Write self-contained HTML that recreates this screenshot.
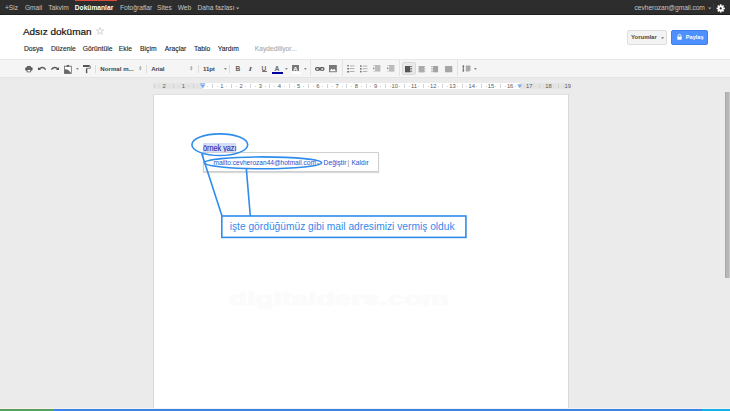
<!DOCTYPE html>
<html><head><meta charset="utf-8">
<style>
*{margin:0;padding:0;box-sizing:border-box}
html,body{width:730px;height:411px;overflow:hidden;background:#ebebeb;font-family:"Liberation Sans",sans-serif;position:relative}
.a{position:absolute;white-space:nowrap;line-height:1}
.b{position:absolute}
#bar{left:0;top:0;width:730px;height:14.7px;background:#2d2d2d;border-bottom:1px solid #1f1f1f}
.tb{color:#c4c4c4;font-size:6.66px;top:5.2px}
#hdr{left:0;top:14.7px;width:730px;height:44.3px;background:#fff}
.mn{font-size:6.78px;color:#222;top:46.3px;-webkit-text-stroke:0.1px currentColor}
#tool{left:0;top:59px;width:730px;height:19px;background:#f5f5f5;border-top:1px solid #e9e9e9;border-bottom:1px solid #e4e4e4}
.sep{position:absolute;width:1px;background:#dcdcdc;top:65px;height:8px}
.sepT{position:absolute;width:1px;background:#e3e3e3;top:60px;height:16px}
.tt{font-size:6.1px;color:#444;font-weight:bold;top:65.6px}
.rn{position:absolute;top:83.5px;width:16px;text-align:center;font-size:5.8px;line-height:1;color:#5a5a5a}
.rl{position:absolute;top:84.3px;width:0.7px;height:3.6px;background:#d2d2d2}
.rd{position:absolute;top:85.6px;width:0.8px;height:0.9px;background:#d0d0d0}
svg{position:absolute;overflow:visible}
</style></head><body>
<div class="b" id="bar"></div>
<div class="b" style="left:74.5px;top:0;width:42.5px;height:1.3px;background:#dd4b39"></div>
<div class="a tb" style="left:4.9px">+Siz</div>
<div class="a tb" style="left:24.9px">Gmail</div>
<div class="a tb" style="left:48.2px">Takvim</div>
<div class="a tb" style="left:74.8px;color:#fff;font-weight:bold">Dokümanlar</div>
<div class="a tb" style="left:120px">Fotoğraflar</div>
<div class="a tb" style="left:157px">Sites</div>
<div class="a tb" style="left:177.7px">Web</div>
<div class="a tb" style="left:197.5px">Daha fazlası</div>
<svg style="left:236px;top:7px" width="4" height="3"><path d="M0 0.5h3.4L1.7 2.4z" fill="#aaa"/></svg>
<div class="a tb" style="left:634.6px;letter-spacing:-0.065px">cevherozan@gmail.com</div>
<svg style="left:707.6px;top:7px" width="4" height="3"><path d="M0 0.5h3.4L1.7 2.4z" fill="#999"/></svg>
<div class="b" style="left:713px;top:3px;width:1px;height:9px;background:#3a3a3a"></div>
<svg style="left:715.5px;top:3.5px" width="10" height="9" viewBox="0 0 10 9">
<g fill="#fff" transform="translate(4.7 4.4) scale(0.93)">
<circle r="3.1"/>
<rect x="-0.9" y="-4.4" width="1.8" height="8.8"/>
<rect x="-0.9" y="-4.4" width="1.8" height="8.8" transform="rotate(45)"/>
<rect x="-0.9" y="-4.4" width="1.8" height="8.8" transform="rotate(90)"/>
<rect x="-0.9" y="-4.4" width="1.8" height="8.8" transform="rotate(135)"/>
<circle r="1.2" fill="#2d2d2d"/>
</g></svg>

<div class="b" id="hdr"></div>
<div class="a" style="left:22.9px;top:26.8px;font-size:9.96px;color:#111;-webkit-text-stroke:0.2px #111">Adsız doküman</div>
<svg style="left:95.5px;top:27.3px" width="8" height="8" viewBox="0 0 8 8"><path d="M4 0.4L4.95 3H7.6L5.45 4.6L6.25 7.3L4 5.65L1.75 7.3L2.55 4.6L0.4 3H3.05Z" fill="none" stroke="#c4c4c4" stroke-width="0.7"/></svg>
<div class="a mn" style="left:23.9px">Dosya</div>
<div class="a mn" style="left:50.9px">Düzenle</div>
<div class="a mn" style="left:82.8px">Görüntüle</div>
<div class="a mn" style="left:118.8px">Ekle</div>
<div class="a mn" style="left:140px">Biçim</div>
<div class="a mn" style="left:164.8px">Araçlar</div>
<div class="a mn" style="left:194px">Tablo</div>
<div class="a mn" style="left:217.7px">Yardım</div>
<div class="a mn" style="left:254.7px;color:#aaa">Kaydediliyor...</div>

<div class="b" style="left:627px;top:30px;width:40px;height:15px;background:#f3f3f3;border:1px solid #dedede;border-radius:2px"></div>
<div class="a" style="left:631px;top:34.4px;font-size:5.98px;font-weight:bold;color:#444">Yorumlar</div>
<svg style="left:660.5px;top:37px" width="4" height="3"><path d="M0 0.3h3.2L1.6 2.1z" fill="#777"/></svg>
<div class="b" style="left:671px;top:30px;width:37px;height:15px;background:#4d90fe;border:1px solid #3f7fe8;border-radius:2px"></div>
<svg style="left:676.8px;top:33.7px" width="5" height="6" viewBox="0 0 5 6"><path d="M1.1 2.6V1.7A1.4 1.4 0 0 1 3.9 1.7V2.6" fill="none" stroke="#fff" stroke-width="0.8"/><rect x="0.3" y="2.5" width="4.4" height="3.2" fill="#fff"/></svg>
<div class="a" style="left:685.8px;top:34.9px;font-size:5.6px;font-weight:bold;color:#fff">Paylaş</div>

<div class="b" id="tool"></div>
<!-- print -->
<svg style="left:24.6px;top:65.6px" width="8" height="7" viewBox="0 0 8 7"><rect x="1.9" y="0.1" width="4" height="1.4" rx="0.4" fill="#5a5a5a"/><rect x="0.2" y="1.3" width="7.4" height="3.4" rx="1.1" fill="#5a5a5a"/><rect x="2.1" y="3.5" width="3.6" height="2.4" fill="#fff" stroke="#5a5a5a" stroke-width="0.75"/></svg>
<!-- undo -->
<svg style="left:38px;top:66.4px" width="8" height="5" viewBox="0 0 8 5"><path d="M0 1L0 4.1L3 4.1Z" fill="#555"/><path d="M1.3 3C3 1 6 0.9 7.6 3.6" fill="none" stroke="#555" stroke-width="1.35"/></svg>
<!-- redo -->
<svg style="left:51px;top:66.4px" width="8" height="5" viewBox="0 0 8 5"><path d="M8 1L8 4.1L5 4.1Z" fill="#555"/><path d="M6.7 3C5 1 2 0.9 0.4 3.6" fill="none" stroke="#555" stroke-width="1.35"/></svg>
<!-- clipboard -->
<svg style="left:63.8px;top:64.6px" width="8" height="9" viewBox="0 0 8 9"><rect x="0.5" y="1.2" width="6.8" height="7.3" fill="#fff" stroke="#666" stroke-width="0.8"/><rect x="2.6" y="0.1" width="2.6" height="1.6" fill="#555"/><path d="M0.5 4.4C3 3.9 5.5 5.5 7.3 8.5H0.5Z" fill="#666"/></svg>
<svg style="left:75.5px;top:68px" width="3" height="2"><path d="M0 0h2.8L1.4 1.9z" fill="#888"/></svg>
<!-- paint format -->
<svg style="left:82.8px;top:64.8px" width="8" height="9" viewBox="0 0 8 9"><rect x="0" y="0" width="6.6" height="2" fill="#555"/><path d="M6.6 1H7.3V3.4H3.6V4" fill="none" stroke="#555" stroke-width="0.7"/><rect x="2.9" y="3.6" width="1.4" height="4.6" fill="#555"/></svg>
<div class="sep" style="left:95px"></div>
<div class="a tt" style="left:100.3px;letter-spacing:0.03px">Normal m...</div>
<svg style="left:138.8px;top:66.2px" width="3" height="5"><path d="M0 1.8h2.6L1.3 0z M0 2.6h2.6L1.3 4.4z" fill="#999"/></svg>
<div class="sep" style="left:146px"></div>
<div class="a tt" style="left:151.2px;letter-spacing:-0.05px">Arial</div>
<svg style="left:189.8px;top:66.2px" width="3" height="5"><path d="M0 1.8h2.6L1.3 0z M0 2.6h2.6L1.3 4.4z" fill="#999"/></svg>
<div class="sep" style="left:197.5px"></div>
<div class="a tt" style="left:203px;letter-spacing:-0.1px">11pt</div>
<svg style="left:224px;top:68px" width="3" height="2"><path d="M0 0h2.8L1.4 1.9z" fill="#888"/></svg>
<div class="sep" style="left:229px"></div>
<!-- B I U -->
<div class="a" style="left:235.6px;top:66.3px;font-size:6.6px;font-weight:bold;color:#5e5e5e">B</div>
<div class="a" style="left:248.6px;top:66.1px;font-size:7px;font-style:italic;font-weight:bold;color:#5e5e5e;font-family:'Liberation Serif',serif;transform:scaleX(1.3)">I</div>
<div class="a" style="left:261.6px;top:66.2px;font-size:6.6px;font-weight:bold;color:#6a6a6a">U</div>
<div class="b" style="left:261.6px;top:71.3px;width:5.6px;height:0.8px;background:#777"></div>
<div class="a" style="left:274.4px;top:65.9px;font-size:6.8px;font-weight:bold;color:#6a6a6a">A</div>
<div class="b" style="left:272px;top:72.2px;width:11px;height:2.2px;background:#0000a0"></div>
<svg style="left:285px;top:68px" width="3" height="2"><path d="M0 0h2.8L1.4 1.9z" fill="#888"/></svg>
<div class="b" style="left:292px;top:64.9px;width:7px;height:6.2px;background:#777"></div>
<div class="a" style="left:293.3px;top:65.6px;font-size:6px;font-weight:bold;color:#fff">A</div>
<div class="b" style="left:292px;top:72.2px;width:9px;height:2px;background:#fff"></div>
<svg style="left:303.5px;top:68px" width="3" height="2"><path d="M0 0h2.8L1.4 1.9z" fill="#888"/></svg>
<div class="sepT" style="left:310px"></div>
<!-- link -->
<svg style="left:314.6px;top:66.6px" width="10" height="4" viewBox="0 0 10 4"><rect x="0.6" y="0.6" width="4" height="2.6" rx="1.2" fill="none" stroke="#555" stroke-width="1.1"/><rect x="5" y="0.6" width="4" height="2.6" rx="1.2" fill="none" stroke="#555" stroke-width="1.1"/><rect x="3" y="1.5" width="3.6" height="0.9" fill="#555"/></svg>
<!-- image -->
<svg style="left:329px;top:64.9px" width="8" height="8" viewBox="0 0 8 8"><rect x="0" y="0" width="7.8" height="7.2" fill="#777"/><path d="M0.8 6.2L2.5 3.6L3.8 5L5.2 3.8L7 6.2Z" fill="#fff"/></svg>
<div class="sepT" style="left:342px"></div>
<!-- numbered list -->
<svg style="left:346.8px;top:65px" width="9" height="8" viewBox="0 0 9 8"><g fill="#777"><rect x="0.2" y="0" width="1.6" height="1.4"/><rect x="0.2" y="3" width="2" height="1.4"/><rect x="0.2" y="6" width="2" height="1.5"/></g><g fill="#aaa"><rect x="3" y="0.5" width="4.5" height="0.9"/><rect x="3" y="3.2" width="4.5" height="0.9"/><rect x="3" y="6.1" width="4.5" height="0.9"/></g></svg>
<!-- bullet list -->
<svg style="left:360.3px;top:65px" width="9" height="8" viewBox="0 0 9 8"><g fill="#777"><rect x="0" y="0.3" width="1.6" height="1.6"/><rect x="0" y="3" width="1.6" height="1.6"/><rect x="0" y="5.8" width="1.6" height="1.6"/></g><g fill="#aaa"><rect x="2.8" y="0.6" width="4.6" height="0.9"/><rect x="2.8" y="3.3" width="4.6" height="0.9"/><rect x="2.8" y="6.1" width="4.6" height="0.9"/></g></svg>
<!-- indent -->
<svg style="left:373.3px;top:65.2px" width="8" height="7" viewBox="0 0 8 7"><rect x="2" y="0" width="5.4" height="6.6" fill="#bbb"/><rect x="0" y="0" width="2" height="0.8" fill="#ccc"/><rect x="0" y="5.8" width="2" height="0.8" fill="#ccc"/><path d="M0.3 2.2L1.6 3.3L0.3 4.4Z" fill="#555"/></svg>
<svg style="left:386.8px;top:65.2px" width="8" height="7" viewBox="0 0 8 7"><rect x="2" y="0" width="5.4" height="6.6" fill="#bbb"/><rect x="0" y="0" width="2" height="0.8" fill="#ccc"/><rect x="0" y="5.8" width="2" height="0.8" fill="#ccc"/><path d="M0.3 2.2L1.6 3.3L0.3 4.4Z" fill="#555"/></svg>
<div class="sepT" style="left:399px"></div>
<!-- align -->
<div class="b" style="left:402px;top:62px;width:14px;height:13.3px;background:#eaeaea;border:1px solid #d9d9d9;border-radius:2px"></div>
<svg style="left:404.9px;top:65.5px" width="8" height="7" viewBox="0 0 8 7"><rect x="0" y="0" width="5" height="6.3" fill="#555"/><g fill="#666"><rect x="5" y="0.2" width="2.1" height="0.8"/><rect x="5" y="1.9" width="2.1" height="0.8"/><rect x="5" y="3.6" width="2.1" height="0.8"/><rect x="5" y="5.3" width="2.1" height="0.8"/></g></svg>
<svg style="left:418.1px;top:65.5px" width="8" height="7" viewBox="0 0 8 7"><rect x="1" y="0" width="5.3" height="6.3" fill="#a3a3a3"/><g fill="#b3b3b3"><rect x="0" y="0.2" width="7.3" height="0.8"/><rect x="0" y="1.9" width="7.3" height="0.8"/><rect x="0" y="3.6" width="7.3" height="0.8"/><rect x="0" y="5.3" width="7.3" height="0.8"/></g></svg>
<svg style="left:431.4px;top:65.5px" width="8" height="7" viewBox="0 0 8 7"><rect x="2.1" y="0" width="5" height="6.3" fill="#a3a3a3"/><g fill="#b3b3b3"><rect x="0" y="0.2" width="2.1" height="0.8"/><rect x="0" y="1.9" width="2.1" height="0.8"/><rect x="0" y="3.6" width="2.1" height="0.8"/><rect x="0" y="5.3" width="2.1" height="0.8"/></g></svg>
<svg style="left:444.6px;top:65.5px" width="8" height="7" viewBox="0 0 8 7"><rect x="0" y="0" width="7.3" height="6.3" fill="#a6a6a6"/></svg>
<div class="sepT" style="left:457px"></div>
<!-- line spacing -->
<svg style="left:462px;top:65px" width="9" height="8" viewBox="0 0 9 8"><path d="M1.3 0L2.6 1.6H1.8V5.4H2.6L1.3 7L0 5.4H0.8V1.6H0Z" fill="#666"/><path d="M3.8 0.5H8.5V5.5L7 6.5H3.8Z" fill="#aaa"/></svg>
<svg style="left:474px;top:68.3px" width="3" height="2"><path d="M0 0h2.8L1.4 1.9z" fill="#888"/></svg>

<!-- ruler -->
<div class="b" style="left:153px;top:83px;width:417px;height:6px;background:#e4e4e4"></div>
<div class="b" style="left:202.5px;top:83px;width:317px;height:6px;background:#fff"></div>
<div class="rl" style="left:154.15px"></div>
<div class="rd" style="left:158.95px"></div>
<div class="rn" style="left:156.16px">2</div>
<div class="rd" style="left:168.56px"></div>
<div class="rl" style="left:173.37px"></div>
<div class="rd" style="left:178.17px"></div>
<div class="rn" style="left:175.38px">1</div>
<div class="rd" style="left:187.78px"></div>
<div class="rl" style="left:192.59px"></div>
<div class="rd" style="left:197.39px"></div>
<div class="rd" style="left:207.00px"></div>
<div class="rl" style="left:211.81px"></div>
<div class="rd" style="left:216.61px"></div>
<div class="rn" style="left:213.82px">1</div>
<div class="rd" style="left:226.22px"></div>
<div class="rl" style="left:231.03px"></div>
<div class="rd" style="left:235.83px"></div>
<div class="rn" style="left:233.04px">2</div>
<div class="rd" style="left:245.44px"></div>
<div class="rl" style="left:250.25px"></div>
<div class="rd" style="left:255.05px"></div>
<div class="rn" style="left:252.26px">3</div>
<div class="rd" style="left:264.67px"></div>
<div class="rl" style="left:269.47px"></div>
<div class="rd" style="left:274.27px"></div>
<div class="rn" style="left:271.48px">4</div>
<div class="rd" style="left:283.88px"></div>
<div class="rl" style="left:288.69px"></div>
<div class="rd" style="left:293.50px"></div>
<div class="rn" style="left:290.70px">5</div>
<div class="rd" style="left:303.11px"></div>
<div class="rl" style="left:307.91px"></div>
<div class="rd" style="left:312.72px"></div>
<div class="rn" style="left:309.92px">6</div>
<div class="rd" style="left:322.33px"></div>
<div class="rl" style="left:327.13px"></div>
<div class="rd" style="left:331.94px"></div>
<div class="rn" style="left:329.14px">7</div>
<div class="rd" style="left:341.55px"></div>
<div class="rl" style="left:346.35px"></div>
<div class="rd" style="left:351.15px"></div>
<div class="rn" style="left:348.36px">8</div>
<div class="rd" style="left:360.76px"></div>
<div class="rl" style="left:365.57px"></div>
<div class="rd" style="left:370.38px"></div>
<div class="rn" style="left:367.58px">9</div>
<div class="rd" style="left:379.99px"></div>
<div class="rl" style="left:384.79px"></div>
<div class="rd" style="left:389.60px"></div>
<div class="rn" style="left:386.80px">10</div>
<div class="rd" style="left:399.21px"></div>
<div class="rl" style="left:404.01px"></div>
<div class="rd" style="left:408.81px"></div>
<div class="rn" style="left:406.02px">11</div>
<div class="rd" style="left:418.43px"></div>
<div class="rl" style="left:423.23px"></div>
<div class="rd" style="left:428.03px"></div>
<div class="rn" style="left:425.24px">12</div>
<div class="rd" style="left:437.64px"></div>
<div class="rl" style="left:442.45px"></div>
<div class="rd" style="left:447.25px"></div>
<div class="rn" style="left:444.46px">13</div>
<div class="rd" style="left:456.87px"></div>
<div class="rl" style="left:461.67px"></div>
<div class="rd" style="left:466.48px"></div>
<div class="rn" style="left:463.68px">14</div>
<div class="rd" style="left:476.09px"></div>
<div class="rl" style="left:480.89px"></div>
<div class="rd" style="left:485.70px"></div>
<div class="rn" style="left:482.90px">15</div>
<div class="rd" style="left:495.30px"></div>
<div class="rl" style="left:500.11px"></div>
<div class="rd" style="left:504.91px"></div>
<div class="rn" style="left:502.12px">16</div>
<div class="rd" style="left:514.52px"></div>
<div class="rl" style="left:519.33px"></div>
<div class="rd" style="left:524.13px"></div>
<div class="rn" style="left:521.34px">17</div>
<div class="rd" style="left:533.75px"></div>
<div class="rl" style="left:538.55px"></div>
<div class="rd" style="left:543.36px"></div>
<div class="rn" style="left:540.56px">18</div>
<div class="rd" style="left:552.97px"></div>
<div class="rl" style="left:557.77px"></div>
<div class="rd" style="left:562.58px"></div>
<div class="rn" style="left:559.78px">19</div>
<svg style="left:199.8px;top:83.3px" width="6" height="6" viewBox="0 0 6 6"><rect x="0.3" y="0.3" width="5" height="1.3" fill="#7eaef0"/><path d="M0.3 2H5.3L2.8 5.3Z" fill="#7eaef0"/></svg>
<svg style="left:516.6px;top:83.3px" width="6" height="6" viewBox="0 0 6 6"><path d="M0.2 1.5H5.2L2.7 5Z" fill="#7eaef0"/></svg>

<!-- page -->
<div class="b" style="left:153px;top:94.4px;width:416px;height:330px;background:#fff;border:1px solid #d8d8d8;border-top-color:#e0e0e0"></div>


<!-- doc content -->
<div class="b" style="left:202.6px;top:143.1px;width:33.8px;height:8.6px;background:#d3ddf3"></div>
<div class="a" style="left:203.2px;top:144.6px;font-size:8.2px;color:#3a2fb0;-webkit-text-stroke:0.15px currentColor;transform:scaleX(0.885);transform-origin:0 0">örnek yazı</div>
<div class="b" style="left:203px;top:152px;width:175.5px;height:20.4px;background:#fff;border:1px solid #d0d0d0;box-shadow:0 1px 1px rgba(0,0,0,0.15)"></div>
<div class="a" style="left:213.5px;top:159.6px;font-size:6.56px;color:#2650cc">mailto:cevherozan44@hotmail.com</div>
<div class="a" style="left:317px;top:159.6px;font-size:6.56px;color:#555">-</div>
<div class="a" style="left:323.6px;top:159.6px;font-size:6.76px;color:#2650cc">Değiştir</div>
<div class="a" style="left:347.6px;top:159.6px;font-size:6.76px;color:#777">|</div>
<div class="a" style="left:351.4px;top:159.6px;font-size:6.63px;color:#2650cc">Kaldır</div>
<div class="a" style="left:229px;top:288.6px;font-size:19.2px;font-weight:bold;color:#fbfbfb;-webkit-text-stroke:1px #fbfbfb;transform:scaleX(1.55);transform-origin:0 0">digitalders.com</div>
<svg style="left:0;top:0" width="730" height="411">
<g fill="none" stroke="#2f8cec" stroke-width="1.6">
<ellipse cx="219.8" cy="144.7" rx="27.9" ry="10.85"/>
<ellipse cx="263" cy="162.85" rx="58.6" ry="5.95"/>
<path d="M201.7 153.5L222 216"/>
<path d="M246.3 168.4L250.3 216"/>
<rect x="221.8" y="216" width="244.1" height="21.4"/>
</g></svg>
<div class="a" style="left:229.7px;top:221.7px;font-size:10.22px;color:#3589ea">işte gördüğümüz gibi mail adresimizi vermiş olduk</div>

<!-- scrollbar -->
<div class="b" style="left:724.8px;top:92px;width:5.2px;height:185.5px;background:#b6b6b6;border-left:1px solid #a8a8a8;box-shadow:inset -0.8px 0 0 #cfcfcf"></div>

<!-- bottom taskbar -->
<div class="b" style="left:0;top:408px;width:730px;height:1px;background:#f4f2ee"></div>
<div class="b" style="left:0;top:409px;width:730px;height:2px;background:#3d84e6"></div>
<div class="b" style="left:0;top:409px;width:54px;height:2px;background:#5aa05a"></div>
<div class="b" style="left:701.5px;top:409px;width:29px;height:2px;background:#18b0ec"></div>
</body></html>
